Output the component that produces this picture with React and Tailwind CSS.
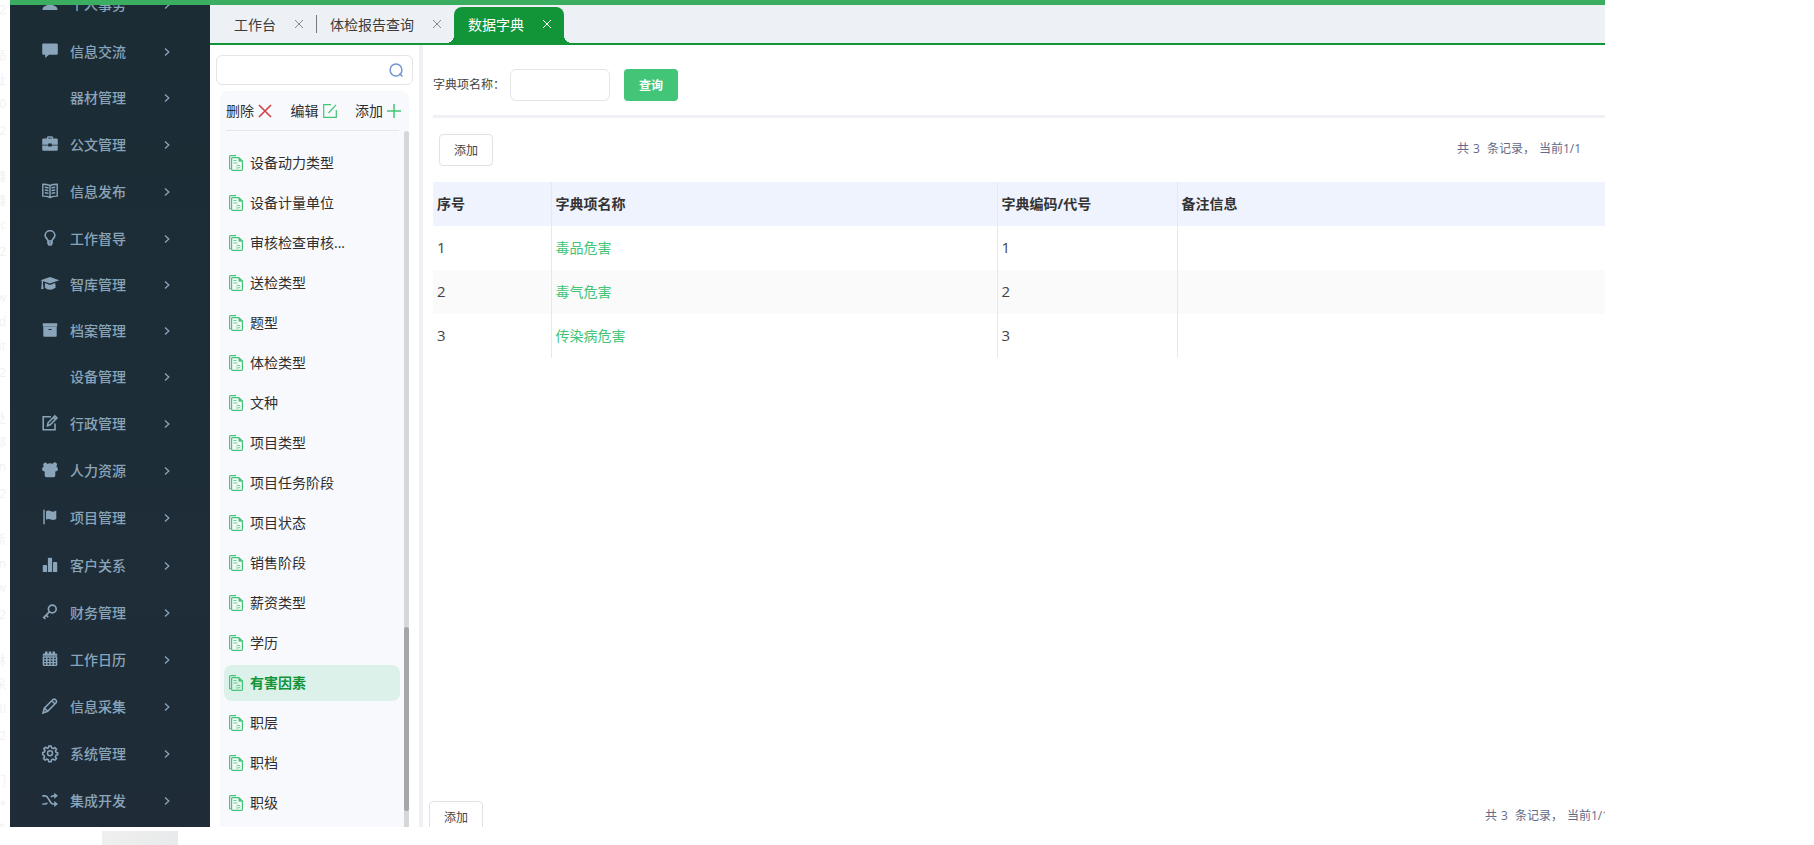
import React, { useState } from "react";
import clsx from "clsx";

const navIcons = {
  user: (
    <path fill="currentColor" d="M8 1a3.6 3.6 0 0 1 2 6.6c.2 1.2 1 1.700 2.400 2.200C14.400 10.600 15.500 11.500 15.500 14H.5c0-2.500 1.100-3.400 3.100-4.200C5 9.300 5.800 8.800 6 7.600A3.600 3.600 0 0 1 8 1z" />
  ),
  chat: (
    <path fill="currentColor" d="M1.500.5h13q1.300 0 1.300 1.300v8.700q0 1.300-1.300 1.300H7L3.200 15v-3.200H1.500Q.2 11.800.2 10.500V1.800Q.2.5 1.500.5z" />
  ),
  briefcase: (
    <>
      <path fill="none" stroke="currentColor" strokeWidth="1.400" d="M5.500 3V1.800q0-.8.800-.8h3.400q.8 0 .8.800V3" />
      <path fill="currentColor" d="M1.500 2.500h13q1.300 0 1.300 1.200v5h-6V7.500H6.200v1.200h-6v-5q0-1.200 1.300-1.200zM.2 9.400h6v1h3.600v-1h6v4.100q0 1.200-1.300 1.200h-13q-1.300 0-1.300-1.200z" />
    </>
  ),
  book: (
    <path
      fill="none"
      stroke="currentColor"
      strokeWidth="1.400"
      d="M8 2.500v12M.8 1.200q4.200 0 7.200 1.300 3-1.300 7.200-1.300v11.900q-4.200 0-7.200 1.400-3-1.400-7.200-1.400zM2.800 4.300q2 .1 3.700.7M2.800 7q2 .1 3.700.7M2.800 9.700q2 .1 3.700.7M13.200 4.300q-2 .1-3.700.7M13.200 7q-2 .1-3.700.7M13.200 9.700q-2 .1-3.700.7"
    />
  ),
  bulb: (
    <path
      fill="none"
      stroke="currentColor"
      strokeWidth="1.600"
      d="M6 11c0-2-2.900-3-2.900-5.800A4.800 4.800 0 0 1 8 .8a4.800 4.800 0 0 1 4.900 4.400C12.900 8 10 9 10 11zM6 11v2.500L7 15h2l1-1.500V11M6 13h4"
    />
  ),
  cap: (
    <path fill="currentColor" d="M8 1l9.300 3.200L8 7.600 1 5.200V8l.6 5H-.900L-.3 8V4.700L-1.300 4.200zM3 7.100l5 1.800 5.200-1.900.5 4.500Q11 13.700 8 13.700q-3.300 0-5.200-2.200z" />
  ),
  archive: (
    <path fill="currentColor" fillRule="evenodd" d="M.8 1.200h14.400v3.200H.8zM1.300 4.800h13.400v9.200q0 .8-.8.8H2.100q-.8 0-.8-.8zM6.500 7v1h3V7z" />
  ),
  edit: (
    <path fill="none" stroke="currentColor" strokeWidth="1.600" d="M9 1.800H1.200v12.900H13V8.500M5.500 10.700l.6-2.900L12.800 1l2.100 2.100-6.700 6.700zM11.300 2.500l2.100 2.100" />
  ),
  users: (
    <path
      fill="currentColor"
      d="M3.300.6a2.200 2.200 0 0 1 2 1.500Q6.300 1.300 8 1.300t2.700.8a2.200 2.200 0 1 1 3.500 2.200q1.800.9 1.800 3.700l-1.500 1.300-1.200.3v3.900q0 1.700-1.700 1.700H4.400q-1.700 0-1.700-1.700V9.600l-1.200-.3L0 8q0-2.800 1.800-3.700A2.200 2.200 0 0 1 3.300.6z"
    />
  ),
  flag: <path fill="currentColor" d="M1.300.8h1.500v14.400H1.300zM4 2.200q2.500-1.300 5 0 2.500 1.200 5.300-.6v8.400q-2.800 1.800-5.300.6-2.500-1.300-5 0z" />,
  chart: (
    <path fill="currentColor" d="M1.600 8h2.600q.8 0 .8.800V15H.8V8.800Q.8 8 1.600 8zM6.700.8h2.600q.8 0 .8.800V15H5.900V1.600q0-.8.800-.8zM11.800 5h2.600q.8 0 .8.800V15H11V5.800q0-.8.800-.8z" />
  ),
  key: (
    <>
      <circle cx="10.300" cy="5" r="3.900" fill="none" stroke="currentColor" strokeWidth="1.700" />
      <path fill="none" stroke="currentColor" strokeWidth="1.700" d="M7.600 7.700L1.800 13.500l1.700 1.300M4.200 11.200l2 2" />
    </>
  ),
  calendar: (
    <>
      <path fill="currentColor" d="M3 .5h2.500v2h1.300v-2h2.400v2h1.300v-2H13v2h1q1.300 0 1.300 1.300v1H.7v-1q0-1.300 1.300-1.300h1z" />
      <path fill="currentColor" fillRule="evenodd" d="M.7 5.200h14.600v8.600q0 1.200-1.200 1.200H1.900q-1.200 0-1.200-1.200zM2.200 6.700v1.600h1.800V6.700zM5.500 6.700v1.600h1.800V6.700zM8.700 6.700v1.600h1.800V6.700zM12 6.700v1.600h1.800V6.700zM2.200 9.500v1.600h1.800V9.500zM5.500 9.500v1.600h1.800V9.500zM8.700 9.500v1.600h1.800V9.500zM12 9.500v1.600h1.800V9.500zM2.200 12.300v1.500h1.800v-1.500zM5.500 12.300v1.500h1.800v-1.500zM8.700 12.300v1.500h1.800v-1.500zM12 12.300v1.500h1.800v-1.500z" />
    </>
  ),
  pencil: (
    <path fill="none" stroke="currentColor" strokeWidth="1.600" d="M1 15l1.300-4.800L11 1.500q1.200-1 2.700.3t.6 2.700l-8.700 8.800zM10 3l3 3M2.600 10.300l3 2.900" />
  ),
  gear: (
    <>
      <path
        fill="none"
        stroke="currentColor"
        strokeWidth="1.600"
        strokeLinejoin="round"
        d="M6.800 1h2.400l.4 1.900 1.700.7 1.600-1.100 1.700 1.700-1.200 1.600.7 1.600 1.600.4v2l-1.700.5-.6 1.700 1.100 1.500-1.700 1.700-1.600-1.100-1.600.7-.4 1.900H6.800l-.5-1.900-1.600-.7-1.500 1.100-1.700-1.700 1.100-1.600-.7-1.600L.7 9.400V7.400l1.700-.5.6-1.500-1.200-1.600 1.700-1.600 1.700 1.100 1.300-.6z"
      />
      <circle cx="8" cy="8.300" r="2.500" fill="none" stroke="currentColor" strokeWidth="1.500" />
    </>
  ),
  shuffle: (
    <>
      <path fill="none" stroke="currentColor" strokeWidth="1.700" d="M.3 3.800h2.500q1.600 0 2.500 1.300l3.600 5.600q.9 1.300 2.500 1.300H13M.3 12h2.500q1.600 0 2.500-1.300M8.900 5.100q.9-1.300 2.500-1.300H13" />
      <path fill="currentColor" d="M12.200.8L16 3.800l-3.800 3zM12.200 9L16 12l-3.800 3z" />
    </>
  ),
};

const menus = [
  { name: "个人事务", icon: "user", height: "h-[47px]" },
  { name: "信息交流", icon: "chat", height: "h-[47px]" },
  { name: "器材管理", height: "h-[46px]" },
  { name: "公文管理", icon: "briefcase", height: "h-[47px]" },
  { name: "信息发布", icon: "book", height: "h-[47px]" },
  { name: "工作督导", icon: "bulb", height: "h-[47px]" },
  { name: "智库管理", icon: "cap", height: "h-[46px]" },
  { name: "档案管理", icon: "archive", height: "h-[46px]" },
  { name: "设备管理", height: "h-[46px]" },
  { name: "行政管理", icon: "edit", height: "h-[47px]" },
  { name: "人力资源", icon: "users", height: "h-[47px]" },
  { name: "项目管理", icon: "flag", height: "h-[48px]" },
  { name: "客户关系", icon: "chart", height: "h-[47px]" },
  { name: "财务管理", icon: "key", height: "h-[47px]" },
  { name: "工作日历", icon: "calendar", height: "h-[47px]" },
  { name: "信息采集", icon: "pencil", height: "h-[47px]" },
  { name: "系统管理", icon: "gear", height: "h-[47px]" },
  { name: "集成开发", icon: "shuffle", height: "h-[47px]" },
];

const dictTypes = [
  "设备动力类型",
  "设备计量单位",
  "审核检查审核...",
  "送检类型",
  "题型",
  "体检类型",
  "文种",
  "项目类型",
  "项目任务阶段",
  "项目状态",
  "销售阶段",
  "薪资类型",
  "学历",
  "有害因素",
  "职层",
  "职档",
  "职级",
];

const rows = [
  { id: 1, name: "毒品危害", code: "1", remark: "" },
  { id: 2, name: "毒气危害", code: "2", remark: "" },
  { id: 3, name: "传染病危害", code: "3", remark: "" },
];

const edgeText = [
  ["02", "品", "址", "20"],
  ["02", "器", "器", "rc"],
  ["02", "w", "d", "ut"],
  ["02", "处", "部", "on"],
  ["02", "新", "in", "w"],
  ["02", "林", "采", "BI"],
  ["02", "们", "*", "值"],
];

const Cross = ({ className }) => (
  <svg viewBox="0 0 10 10" className={className} fill="none" stroke="currentColor" aria-hidden="true">
    <path d="M1 1l8 8M9 1L1 9" />
  </svg>
);

const DocIcon = () => (
  <svg viewBox="0 0 14 16" className="mb-px h-4 w-3.5 shrink-0" fill="none" stroke="#42c577" aria-hidden="true">
    <path d="M1.800 13.600H.6V1.600q0-1 1-1H7" strokeWidth="1.200" />
    <path d="M3.600 2.600h6.200l3.600 3.500v8.100q0 1.200-1.200 1.200H3.800q-1.200 0-1.200-1.200V3.600q0-1 1-1z" strokeWidth="1.200" />
    <path d="M9.800 3v3.200h3.400z" fill="#42c577" strokeWidth=".6" />
    <path d="M4.500 5.500h3M4.500 8h4M11 10.500q-3.800-.6-3.800 1M7.200 13q3.800.4 4.200-1.400" strokeOpacity=".8" />
  </svg>
);

const Sidebar = () => (
  <nav className="flex w-[200px] shrink-0 flex-col justify-end overflow-hidden bg-linear-to-b from-[#1c2c35] via-[#1d2d37] to-[#1f2c37] pb-[3px]">
    <ul>
      {menus.map((item) => (
        <li key={item.name}>
          <a href="#" className={clsx("flex items-center pr-10 pl-8 text-sm font-medium text-[#8aa4b9]", item.height)}>
            <span className="mr-3 mb-0.5 size-4">
              {item.icon && (
                <svg viewBox="0 0 16 16" className="size-4 overflow-visible" aria-hidden="true">
                  {navIcons[item.icon]}
                </svg>
              )}
            </span>
            <span className="grow">{item.name}</span>
            <svg viewBox="0 0 6 10" className="h-2.5 w-1.5" fill="none" stroke="currentColor" strokeWidth="1.300" aria-hidden="true">
              <path d="M1 1.500L4.800 5 1 8.500" />
            </svg>
          </a>
        </li>
      ))}
    </ul>
  </nav>
);

const TabBar = () => (
  <header className="flex h-10 shrink-0 items-stretch border-b-2 border-[#129439] bg-[#edf1f6] pl-6 text-sm text-[#3c3c3c]">
    <div className="flex items-center gap-4.5 pt-0.5 pr-3">
      <a href="#">工作台</a>
      <button type="button" aria-label="关闭工作台" className="mb-0.5 text-[#8a8a8a]">
        <Cross className="size-2.5" />
      </button>
    </div>
    <div className="my-auto h-4.5 w-px bg-[#77797c]" />
    <div className="flex items-center gap-4.5 px-3 pt-0.5 pl-[13px]">
      <a href="#">体检报告查询</a>
      <button type="button" aria-label="关闭体检报告查询" className="mb-0.5 text-[#8a8a8a]">
        <Cross className="size-2.5" />
      </button>
    </div>
    <div className="relative mt-0.5 flex items-center gap-4.5 rounded-t-lg bg-[#129439] pr-3 pl-3.5 text-white before:absolute before:bottom-0 before:-left-2 before:size-2 before:bg-[radial-gradient(circle_at_0_0,transparent_8px,#129439_8px)] after:absolute after:-right-2 after:bottom-0 after:size-2 after:bg-[radial-gradient(circle_at_100%_0,transparent_8px,#129439_8px)]">
      <a href="#">数据字典</a>
      <button type="button" aria-label="关闭数据字典" className="mb-0.5">
        <Cross className="size-2.5" />
      </button>
    </div>
  </header>
);

const DictTree = () => {
  const [active, setActive] = useState("有害因素");

  return (
    <aside className="flex w-[213px] shrink-0 flex-col border-r-4 border-[#eff0f6] pt-2.5 pr-1.5 pl-1.5">
      <div className="flex h-[30px] shrink-0 items-center rounded-md border border-[#e4e5e7] pr-2">
        <input type="text" aria-label="搜索字典" className="min-w-0 grow px-2 text-sm outline-none" />
        <button type="button" aria-label="搜索">
          <svg viewBox="0 0 16 16" className="size-4" fill="none" stroke="#7195cf" strokeWidth="1.500" aria-hidden="true">
            <circle cx="8" cy="8" r="5.900" />
            <path d="M11.500 11.500l3 3" />
          </svg>
        </button>
      </div>
      <div className="mt-1.5 mr-1 ml-1 flex min-h-0 grow flex-col rounded-t-lg bg-[#f8f9fd]">
        <div className="mr-2.5 ml-1.5 flex h-10 shrink-0 items-center justify-between border-b border-[#e6e7ec] text-sm text-[#2e2e2e]">
          <button type="button" className="flex items-center gap-1">
            删除
            <svg viewBox="0 0 14 14" className="size-3.5" fill="none" stroke="#d03f45" strokeWidth="1.600" aria-hidden="true">
              <path d="M1 1l12 12M13 1L1 13" />
            </svg>
          </button>
          <button type="button" className="flex items-center gap-1">
            编辑
            <svg viewBox="0 0 14 14" className="size-3.5" fill="none" stroke="#42c577" strokeWidth="1.200" aria-hidden="true">
              <path d="M8 .7H.7v12.600h12.600V6M5.500 9L13 .8" />
            </svg>
          </button>
          <button type="button" className="-mr-0.5 flex items-center gap-1">
            添加
            <svg viewBox="0 0 14 14" className="size-3.5" fill="none" stroke="#42c577" strokeWidth="1.500" aria-hidden="true">
              <path d="M7 0v14M0 7h14" />
            </svg>
          </button>
        </div>
        <div className="flex min-h-0 grow">
          <ul className="flex min-w-0 grow flex-col gap-1 overflow-hidden pt-3.5 pr-1 pl-1">
            {dictTypes.map((name) => (
              <li key={name}>
                <button
                  type="button"
                  onClick={() => setActive(name)}
                  className={clsx(
                    "flex h-9 w-full items-center gap-[7px] rounded-lg pl-[5px] text-left text-sm",
                    name === active ? "bg-[#dcf1e9] font-bold text-[#129439]" : "text-[#2e2e2e]"
                  )}
                >
                  <DocIcon />
                  {name}
                </button>
              </li>
            ))}
          </ul>
          {/* scroll bar */}
          <div className="flex w-[5px] shrink-0 flex-col rounded-t-sm bg-[#d6d7db]">
            <div className="grow-[496]" />
            <div className="grow-[184] rounded-sm bg-[#a5a6aa]" />
            <div className="grow-[16]" />
          </div>
        </div>
      </div>
    </aside>
  );
};

const AddButton = () => (
  <button type="button" className="h-8 w-[54px] shrink-0 rounded border border-[#e2e2e4] bg-white pt-0.5 text-xs text-[#444]">
    添加
  </button>
);

const RecordCount = ({ className }) => (
  <p className={clsx("flex shrink-0 text-xs leading-[30px] whitespace-nowrap text-[#5f6b8a]", className)}>
    <span className="mr-1">共</span>
    <span className="mr-[7px]">3</span>
    <span className="mr-1">条记录，</span>
    <span>当前1/1</span>
  </p>
);

const DictTable = () => (
  <table className="w-full table-fixed border-collapse text-left text-sm text-[#333]">
    <colgroup>
      <col className="w-[118px]" />
      <col className="w-[446px]" />
      <col className="w-[180px]" />
      <col />
    </colgroup>
    <thead>
      <tr className="h-11 bg-[#eff3fd]">
        <th className="border-r border-[#e6e8f0] px-1 font-bold">序号</th>
        <th className="border-r border-[#e6e8f0] px-1 font-bold">字典项名称</th>
        <th className="border-r border-[#e6e8f0] px-1 font-bold">字典编码/代号</th>
        <th className="px-1 font-bold">备注信息</th>
      </tr>
    </thead>
    <tbody>
      {rows.map((row) => (
        <tr key={row.id} className="h-11 even:bg-[#fafafa]">
          <td className="border-r border-[#e6e8f0] px-1 text-[15px] text-[#444]">{row.id}</td>
          <td className="border-r border-[#e6e8f0] px-1">
            <a href="#" className="text-[#42c577]">{row.name}</a>
          </td>
          <td className="border-r border-[#e6e8f0] px-1 text-[15px] text-[#444]">{row.code}</td>
          <td className="px-1">{row.remark}</td>
        </tr>
      ))}
    </tbody>
  </table>
);

const Content = () => (
  <main className="flex min-w-0 grow flex-col overflow-hidden">
    <div className="ml-2.5">
      <form className="flex h-[73px] items-center border-b-3 border-[#f0f0f5] pt-2.5 text-xs text-[#444]" onSubmit={(e) => e.preventDefault()}>
        <label htmlFor="dictName" className="w-[77px]">字典项名称：</label>
        <input id="dictName" type="text" className="h-8 w-[100px] rounded-md border border-[#e4e5e7] px-2 outline-none" />
        <button type="submit" className="ml-3.5 h-8 w-[54px] rounded bg-[#42c577] pt-0.5 font-bold text-white">查询</button>
      </form>
      <div className="flex items-start justify-between pt-4 pr-6 pb-4 pl-1.5">
        <AddButton />
        <RecordCount />
      </div>
      <DictTable />
    </div>
    <div className="mt-auto flex h-[26px] shrink-0 items-start justify-between overflow-hidden pl-1.5">
      <AddButton />
      <RecordCount className="-mr-1" />
    </div>
  </main>
);

export default function App() {
  return (
    <div className="flex h-screen flex-col overflow-hidden bg-white font-['Open_Sans','Noto_Sans_CJK_SC',sans-serif]">
      <div className="flex min-h-0 grow pr-[209px]">
        <div className="w-2.5 shrink-0 overflow-hidden pr-1 text-xs text-[#f1f1f1]" aria-hidden="true">
          {edgeText.map((group, i) => (
            <div key={i} className="flex h-[121px] flex-col items-end leading-6">
              <span className="mb-6 h-5 leading-5">{group[0]}</span>
              <span>{group[1]}</span>
              <span>{group[2]}</span>
              <span>{group[3]}</span>
            </div>
          ))}
        </div>
        <div className="flex min-w-0 grow flex-col border-t-5 border-[#3bad60]">
          <div className="flex min-h-0 grow">
            <Sidebar />
            <div className="flex min-w-0 grow flex-col">
              <TabBar />
              <div className="flex min-h-0 grow">
                <DictTree />
                <Content />
              </div>
            </div>
          </div>
        </div>
      </div>
      <footer className="h-4.5 shrink-0 pt-1">
        <div className="ml-[102px] h-full w-[76px] bg-linear-to-r from-[#efefef] to-[#e9eaeb]" />
      </footer>
    </div>
  );
}
